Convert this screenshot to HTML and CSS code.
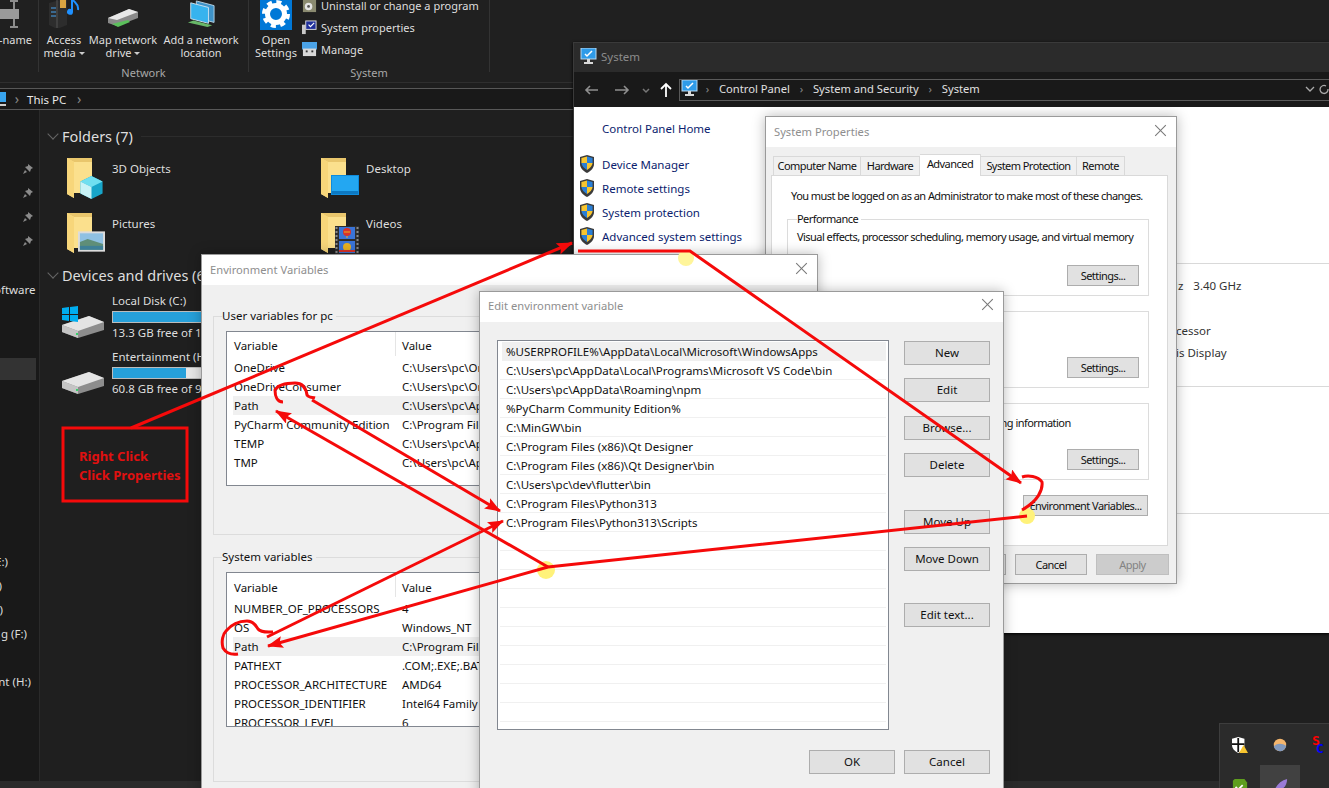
FILE: index.html
```html
<!DOCTYPE html>
<html lang="en">
<head>
    <meta charset="UTF-8">
    <meta name="viewport" content="width=device-width, initial-scale=1.0">
    <title>Environment Variables</title>
    <link rel="stylesheet" href="styles.css">
</head>
<body>
    <svg class="defs" width="0" height="0">
        <symbol id="folder" viewBox="0 0 26 42">
            <path d="M0 1h25v35H0z" fill="#e9c66c"/>
            <path d="M0 1l7 4h18v31H7v5l-7-4z" fill="#fbe08d"/>
            <path d="M0 1l7 4v36l-7-4z" fill="#f7d67a"/>
        </symbol>
        <symbol id="shield" viewBox="0 0 16 18">
            <path d="M8 0l7 2v7c0 4-3 7-7 9-4-2-7-5-7-9V2z" fill="#3b3b3b"/>
            <path d="M8 1.500l5.600 1.600V8H8z" fill="#2a7fd6"/>
            <path d="M8 1.500L2.400 3.100V8H8z" fill="#f7c52f"/>
            <path d="M8 8h5.600c-.3 3-2.700 5.300-5.600 7z" fill="#f7c52f"/>
            <path d="M8 8H2.400c.3 3 2.700 5.300 5.600 7z" fill="#2a7fd6"/>
        </symbol>
        <symbol id="drive" viewBox="0 0 42 22">
            <path d="M0 9L27 0l15 6v8L16 22 0 16z" fill="#8d8d8d"/>
            <path d="M0 9L27 0l15 6-26 9z" fill="#e4e4e4"/>
            <path d="M0 9l16 6v7L0 16z" fill="#c4c4c4"/>
            <rect x="14" y="17" width="2" height="2" fill="#35d06a"/>
        </symbol>
        <symbol id="monitor" viewBox="0 0 17 18">
            <rect x="1" y="0" width="15" height="11" fill="#2f9be8" stroke="#b8d8f0"/>
            <path d="M5 6l2 2 5-5" stroke="#fff" stroke-width="1.500" fill="none"/>
            <path d="M7 11h3v3h3v2H4v-2h3z" fill="#d8d8d8"/>
        </symbol>
        <marker id="head" markerWidth="16" markerHeight="12" refX="15" refY="6" orient="auto" markerUnits="userSpaceOnUse">
            <path d="M0 0L16 6 0 12 3 6z" fill="#f50a0a"/>
        </marker>
    </svg>

    <div class="desktop">
        <div class="explorer">
            <div class="ribbon">
                <div class="rib-group rib-clip">
                    <div class="rib-items">
                        <div class="rib-item rib-rename">
                            <svg class="rib-icon" viewBox="0 0 24 28"><path d="M13 1h8M13 27h8M17 1v26" stroke="#8c8c8c" stroke-width="2"/><rect x="-4" y="9" width="26" height="10" fill="#9a9a9a"/></svg>
                            <span>Re-name</span>
                        </div>
                    </div>
                </div>
                <div class="rib-group rib-network">
                    <div class="rib-items">
                        <div class="rib-item rib-media">
                            <svg class="rib-icon" viewBox="0 0 32 28"><path d="M1 3l18-5v27L9 29 1 25z" fill="#2d2d2d"/><path d="M9 0v29" stroke="#555"/><path d="M3 8h5M3 12h5M3 16h5" stroke="#49a5f2"/><rect x="12" y="0" width="6" height="8" fill="#d9a441"/><path d="M25 0v12a3 3 0 1 1-2-3V0z" fill="#1e90ff"/><path d="M25 0c2 3 6 4 5 10" stroke="#1e90ff" stroke-width="2" fill="none"/></svg>
                            <span>Access<br>media <i class="caret"></i></span>
                        </div>
                        <div class="rib-item rib-map">
                            <svg class="rib-icon" viewBox="0 0 32 28"><path d="M1 18L22 9l9 3v6L10 26 1 23z" fill="#8a8a8a"/><path d="M1 18L22 9l9 3-21 8z" fill="#e8e8e8"/><path d="M5 24l6 3 12-5-2-2z" fill="#5cc05c"/></svg>
                            <span>Map network<br>drive <i class="caret"></i></span>
                        </div>
                        <div class="rib-item rib-add">
                            <svg class="rib-icon" viewBox="0 0 30 30"><path d="M10 1l19 5v18l-19-5z" fill="#3f93c8" stroke="#b9d4e4"/><path d="M4 3l19 5v17L4 20z" fill="#37b3ee" stroke="#cfe2ee"/><path d="M1 24l6-2 20 5-5 2z" fill="#68b868"/></svg>
                            <span>Add a network<br>location</span>
                        </div>
                    </div>
                    <div class="rib-label">Network</div>
                </div>
                <div class="rib-group rib-system">
                    <div class="rib-items">
                        <div class="rib-item rib-settings">
                            <div class="gear-tile">
                                <svg viewBox="0 0 32 30"><circle cx="16" cy="14" r="8.500" fill="none" stroke="#fff" stroke-width="5"/><circle cx="16" cy="14" r="12" fill="none" stroke="#fff" stroke-width="4" stroke-dasharray="5 4.420"/></svg>
                            </div>
                            <span>Open<br>Settings</span>
                        </div>
                        <div class="rib-list">
                            <div class="rib-link">
                                <svg viewBox="0 0 16 16"><rect x="1" y="0" width="14" height="15" fill="#8a8a70"/><circle cx="7" cy="9" r="4" fill="#e4e4e4"/><circle cx="7" cy="9" r="1.500" fill="#555"/></svg>
                                Uninstall or change a program
                            </div>
                            <div class="rib-link">
                                <svg viewBox="0 0 16 16"><rect x="4" y="1" width="11" height="9" fill="#1f2f9a" stroke="#ddd"/><path d="M7 5l2 2 4-4" stroke="#fff" stroke-width="1.300" fill="none"/><rect x="0" y="5" width="4" height="10" fill="#c9c9c9"/></svg>
                                System properties
                            </div>
                            <div class="rib-link">
                                <svg viewBox="0 0 16 16"><rect x="0" y="0" width="16" height="8" fill="#4aa3e8"/><rect x="1" y="7" width="14" height="8" fill="#d8d8d8"/><rect x="4" y="9" width="2" height="2" fill="#333"/><rect x="10" y="9" width="2" height="2" fill="#333"/></svg>
                                Manage
                            </div>
                        </div>
                    </div>
                    <div class="rib-label">System</div>
                </div>
            </div>

            <div class="addr">
                <svg class="addr-pc" viewBox="0 0 7 16"><rect x="-9" y="1" width="15" height="10" fill="#38a4ee"/><rect x="-9" y="13" width="15" height="2" fill="#cfcfcf"/></svg>
                <span class="addr-sep">›</span>
                <span class="addr-text">This PC</span>
                <span class="addr-sep">›</span>
            </div>

            <div class="ex-body">
                <div class="nav">
                    <div class="pins">
                        <svg viewBox="0 0 12 12"><path d="M6 1l5 4-2 1-1 3-5-5 3-1zM3 7l-2 4 4-2z" fill="#8a8a8a"/></svg>
                        <svg viewBox="0 0 12 12"><path d="M6 1l5 4-2 1-1 3-5-5 3-1zM3 7l-2 4 4-2z" fill="#8a8a8a"/></svg>
                        <svg viewBox="0 0 12 12"><path d="M6 1l5 4-2 1-1 3-5-5 3-1zM3 7l-2 4 4-2z" fill="#8a8a8a"/></svg>
                        <svg viewBox="0 0 12 12"><path d="M6 1l5 4-2 1-1 3-5-5 3-1zM3 7l-2 4 4-2z" fill="#8a8a8a"/></svg>
                    </div>
                    <div class="nav-row nav-soft">oftware</div>
                    <div class="nav-row nav-selected"></div>
                    <div class="nav-drives">
                        <div class="nav-row nav-e">(E:)</div>
                        <div class="nav-row nav-i">(I:)</div>
                        <div class="nav-row nav-j">(J:)</div>
                        <div class="nav-row nav-f">g (F:)</div>
                        <div class="nav-row"></div>
                        <div class="nav-row nav-h">nt (H:)</div>
                    </div>
                </div>
                <div class="content">
                    <div class="sec-head"><i class="chev"></i><span>Folders (7)</span><b></b></div>
                    <div class="folders">
                        <div class="folder">
                            <div class="folder-pic">
                                <svg class="f-base"><use href="#folder"/></svg>
                                <svg class="f-badge" viewBox="0 0 26 26"><path d="M13 1l12 6v13l-12 6-12-6V7z" fill="#17a5c9"/><path d="M13 1l12 6-12 6L1 7z" fill="#6fdff0"/><path d="M1 7l12 6v13L1 20z" fill="#c8f3f7"/></svg>
                            </div>
                            <span>3D Objects</span>
                        </div>
                        <div class="folder">
                            <div class="folder-pic">
                                <svg class="f-base"><use href="#folder"/></svg>
                                <svg class="f-badge f-desk" viewBox="0 0 28 20"><rect width="28" height="20" fill="#0f8bdc"/><path d="M1 1h26v17H1z" fill="#23a7f2"/><path d="M1 16h26v3H1z" fill="#0d79c2"/></svg>
                            </div>
                            <span>Desktop</span>
                        </div>
                        <div class="folder">
                            <div class="folder-pic">
                                <svg class="f-base"><use href="#folder"/></svg>
                                <svg class="f-badge" viewBox="0 0 28 22"><rect width="28" height="21" fill="#dcdcdc"/><rect x="2" y="2" width="24" height="17" fill="#8fc1e3"/><path d="M2 11l8-3 16 5v6H2z" fill="#5f8e78"/><path d="M2 15h24v4H2z" fill="#3e7f96"/></svg>
                            </div>
                            <span>Pictures</span>
                        </div>
                        <div class="folder">
                            <div class="folder-pic">
                                <svg class="f-base"><use href="#folder"/></svg>
                                <svg class="f-badge f-film" viewBox="0 0 24 28"><rect width="24" height="28" fill="#2d2d2d"/><path d="M1.500 1v26M22.500 1v26" stroke="#8a8a8a" stroke-width="2" stroke-dasharray="2 2"/><rect x="4" y="1" width="16" height="12" fill="#3a74d8"/><rect x="4" y="15" width="16" height="12" fill="#3a74d8"/><circle cx="12" cy="6" r="4" fill="#d9322a"/><path d="M9 6h6M12 10v2" stroke="#e8b020"/><circle cx="12" cy="21" r="4" fill="#e8b020"/><path d="M4 25h16" stroke="#d9322a" stroke-width="2"/></svg>
                            </div>
                            <span>Videos</span>
                        </div>
                    </div>
                    <div class="sec-head sec-drives"><i class="chev"></i><span>Devices and drives (6)</span><b></b></div>
                    <div class="disks">
                        <div class="disk">
                            <div class="disk-pic">
                                <svg class="d-base"><use href="#drive"/></svg>
                                <svg class="d-win" viewBox="0 0 16 16"><path d="M0 2l7-1v7H0zM8 1l8-1v8H8zM0 9h7v6l-7-1zM8 9h8v7l-8-1z" fill="#00adef"/></svg>
                            </div>
                            <div class="disk-info">
                                <div>Local Disk (C:)</div>
                                <div class="bar"><div class="bar-fill" style="width: 88%"></div></div>
                                <div>13.3 GB free of 118 GB</div>
                            </div>
                        </div>
                        <div class="disk">
                            <div class="disk-pic">
                                <svg class="d-base"><use href="#drive"/></svg>
                            </div>
                            <div class="disk-info">
                                <div>Entertainment (H:)</div>
                                <div class="bar"><div class="bar-fill" style="width: 29%"></div></div>
                                <div>60.8 GB free of 99.9 GB</div>
                            </div>
                        </div>
                    </div>
                </div>
            </div>
            <div class="status"></div>
        </div>

        <div class="tray">
            <div class="tray-cell">
                <svg viewBox="0 0 18 18"><path d="M7 0l7 2v7c0 4-3 7-7 9-4-2-7-5-7-9V2z" fill="#fff"/><path d="M6 1h2v16H6zM0 7h14v2H0z" fill="#111"/><path d="M13 9l5 9H8z" fill="#f7c52f"/></svg>
            </div>
            <div class="tray-cell">
                <svg viewBox="0 0 18 18"><circle cx="9" cy="9" r="7" fill="#f3b56d"/><path d="M2 11c2-4 9-5 14-1-1 4-4 6-7 6s-6-2-7-5z" fill="#8199bd"/></svg>
            </div>
            <div class="tray-cell tray-sc"><span class="sc-s">S</span><span class="sc-c">C</span></div>
            <div class="tray-cell">
                <svg viewBox="0 0 18 18"><path d="M3 1h11l3 4v13H1V3z" fill="#5f9e1e"/><path d="M4 10l3 3 5-5" stroke="#fff" stroke-width="2" fill="none"/></svg>
            </div>
            <div class="tray-cell tray-hover">
                <svg viewBox="0 0 18 18"><path d="M2 18C3 9 9 3 17 1c0 8-5 13-12 13z" fill="#9b7bd8"/></svg>
            </div>
        </div>

        <section class="win win-system">
            <div class="sys-title">
                <svg class="mini"><use href="#monitor"/></svg>
                <span>System</span>
            </div>
            <div class="sys-nav">
                <svg class="nav-arrows" viewBox="0 0 94 16">
                    <path d="M17 8H5M9 4L5 8l4 4" stroke="#8f8f8f" stroke-width="1.600" fill="none"/>
                    <path d="M34 8h13M43 4l4 4-4 4" stroke="#8f8f8f" stroke-width="1.600" fill="none"/>
                    <path d="M62 7l3 3 3-3" stroke="#777" stroke-width="1.500" fill="none"/>
                    <path d="M85 15V2M80 7l5-5 5 5" stroke="#fff" stroke-width="1.800" fill="none"/>
                </svg>
                <div class="sys-addr">
                    <svg class="mini"><use href="#monitor"/></svg>
                    <span class="crumb-sep">›</span><span>Control Panel</span>
                    <span class="crumb-sep">›</span><span>System and Security</span>
                    <span class="crumb-sep">›</span><span>System</span>
                    <svg class="addr-end" viewBox="0 0 24 12"><path d="M1 4l4 4 4-4" stroke="#aaa" fill="none" stroke-width="1.300"/><path d="M23 6a4 4 0 1 1-2-3" stroke="#aaa" fill="none" stroke-width="1.300"/></svg>
                </div>
            </div>
            <div class="sys-body">
                <div class="sys-side">
                    <div class="side-home">Control Panel Home</div>
                    <div class="side-link"><svg><use href="#shield"/></svg>Device Manager</div>
                    <div class="side-link"><svg><use href="#shield"/></svg>Remote settings</div>
                    <div class="side-link"><svg><use href="#shield"/></svg>System protection</div>
                    <div class="side-link"><svg><use href="#shield"/></svg>Advanced system settings</div>
                </div>
                <div class="sys-info">
                    <div class="info-rule info-top"></div>
                    <div class="info-row info-ghz"><span>GHz</span><span class="info-speed">3.40 GHz</span></div>
                    <div class="info-row info-cpu">cessor</div>
                    <div class="info-row info-disp">is Display</div>
                    <div class="info-rule info-mid"></div>
                    <div class="info-rule info-low"></div>
                </div>
            </div>
        </section>

        <section class="win dlg dlg-props">
            <div class="dlg-title"><span>System Properties</span><i class="close"></i></div>
            <div class="dlg-body props-body">
                <div class="tabs">
                    <div class="tab tab-1">Computer Name</div>
                    <div class="tab tab-2">Hardware</div>
                    <div class="tab tab-on">Advanced</div>
                    <div class="tab tab-4">System Protection</div>
                    <div class="tab tab-5">Remote</div>
                </div>
                <div class="tab-panel">
                    <p class="admin-note">You must be logged on as an Administrator to make most of these changes.</p>
                    <fieldset class="prop-box">
                        <legend>Performance</legend>
                        <p>Visual effects, processor scheduling, memory usage, and virtual memory</p>
                        <div class="btn-end"><button class="btn btn-small">Settings...</button></div>
                    </fieldset>
                    <fieldset class="prop-box prop-profile">
                        <legend>User Profiles</legend>
                        <p>Desktop settings related to your sign-in</p>
                        <div class="btn-end"><button class="btn btn-small">Settings...</button></div>
                    </fieldset>
                    <fieldset class="prop-box prop-startup">
                        <legend>Startup and Recovery</legend>
                        <p>System startup, system failure, and debugging information</p>
                        <div class="btn-end"><button class="btn btn-small">Settings...</button></div>
                    </fieldset>
                    <div class="btn-end env-row"><button class="btn btn-env">Environment Variables...</button></div>
                </div>
                <div class="props-foot">
                    <button class="btn btn-small">OK</button>
                    <button class="btn btn-small">Cancel</button>
                    <button class="btn btn-small btn-off">Apply</button>
                </div>
            </div>
        </section>

        <section class="win dlg dlg-env">
            <div class="dlg-title"><span>Environment Variables</span><i class="close"></i></div>
            <div class="dlg-body env-body">
                <fieldset class="env-group">
                    <legend>User variables for pc</legend>
                    <div class="var-list">
                        <div class="var-head var-head-user"><span>Variable</span><span class="val-head">Value</span></div>
                        <div class="var-row"><span>OneDrive</span><span>C:\Users\pc\OneDrive</span></div>
                        <div class="var-row"><span>OneDriveConsumer</span><span>C:\Users\pc\OneDrive</span></div>
                        <div class="var-row var-sel"><span>Path</span><span>C:\Users\pc\AppData</span></div>
                        <div class="var-row"><span>PyCharm Community Edition</span><span>C:\Program Files</span></div>
                        <div class="var-row"><span>TEMP</span><span>C:\Users\pc\AppData</span></div>
                        <div class="var-row"><span>TMP</span><span>C:\Users\pc\AppData</span></div>
                    </div>
                </fieldset>
                <fieldset class="env-group env-group-sys">
                    <legend>System variables</legend>
                    <div class="var-list">
                        <div class="var-head"><span>Variable</span><span class="val-head">Value</span></div>
                        <div class="var-row"><span>NUMBER_OF_PROCESSORS</span><span>4</span></div>
                        <div class="var-row"><span>OS</span><span>Windows_NT</span></div>
                        <div class="var-row var-sel"><span>Path</span><span>C:\Program Files</span></div>
                        <div class="var-row"><span>PATHEXT</span><span>.COM;.EXE;.BAT;.CMD</span></div>
                        <div class="var-row"><span>PROCESSOR_ARCHITECTURE</span><span>AMD64</span></div>
                        <div class="var-row"><span>PROCESSOR_IDENTIFIER</span><span>Intel64 Family 6</span></div>
                        <div class="var-row"><span>PROCESSOR_LEVEL</span><span>6</span></div>
                    </div>
                </fieldset>
            </div>
        </section>

        <section class="win dlg dlg-edit">
            <div class="dlg-title"><span>Edit environment variable</span><i class="close"></i></div>
            <div class="dlg-body edit-body">
                <div class="edit-main">
                    <div class="path-list">
                        <div class="path-row path-sel">%USERPROFILE%\AppData\Local\Microsoft\WindowsApps</div>
                        <div class="path-row">C:\Users\pc\AppData\Local\Programs\Microsoft VS Code\bin</div>
                        <div class="path-row">C:\Users\pc\AppData\Roaming\npm</div>
                        <div class="path-row">%PyCharm Community Edition%</div>
                        <div class="path-row">C:\MinGW\bin</div>
                        <div class="path-row">C:\Program Files (x86)\Qt Designer</div>
                        <div class="path-row">C:\Program Files (x86)\Qt Designer\bin</div>
                        <div class="path-row">C:\Users\pc\dev\flutter\bin</div>
                        <div class="path-row">C:\Program Files\Python313</div>
                        <div class="path-row">C:\Program Files\Python313\Scripts</div>
                        <div class="path-row"></div>
                        <div class="path-row"></div>
                        <div class="path-row"></div>
                        <div class="path-row"></div>
                        <div class="path-row"></div>
                        <div class="path-row"></div>
                        <div class="path-row"></div>
                        <div class="path-row"></div>
                        <div class="path-row"></div>
                        <div class="path-row"></div>
                    </div>
                    <div class="edit-btns">
                        <button class="btn btn-wide">New</button>
                        <button class="btn btn-wide">Edit</button>
                        <button class="btn btn-wide btn-nudge">Browse...</button>
                        <button class="btn btn-wide">Delete</button>
                        <button class="btn btn-wide btn-gap">Move Up</button>
                        <button class="btn btn-wide">Move Down</button>
                        <button class="btn btn-wide btn-gap-last">Edit text...</button>
                    </div>
                </div>
                <div class="edit-foot">
                    <button class="btn btn-wide">OK</button>
                    <button class="btn btn-wide">Cancel</button>
                </div>
            </div>
        </section>

        <svg class="marks" viewBox="0 0 1329 788">
            <circle cx="686" cy="258" r="8" fill="#fff59a"/>
            <circle cx="1027" cy="516" r="8" fill="#fff27a"/>
            <circle cx="546" cy="570" r="9" fill="#fff27a"/>
            <rect x="63" y="428" width="124" height="73" class="mark-line"/>
            <path d="M131 428L572 243" class="mark-line" marker-end="url(#head)"/>
            <path d="M578 251H690L1021 483" class="mark-line" marker-end="url(#head)"/>
            <path d="M1022 477C1028 475 1038 476 1042 482C1043 490 1038 501 1022 510" class="mark-line"/>
            <path d="M1027 516L548 567L268 646" class="mark-line" marker-end="url(#head)"/>
            <path d="M548 567L276 411" class="mark-line" marker-end="url(#head)"/>
            <path d="M312 400L500 511" class="mark-line" marker-end="url(#head)"/>
            <path d="M267 637L503 521" class="mark-line" marker-end="url(#head)"/>
            <path d="M283 402C277 402 275 396 275 390C278 385 284 383 295 383C303 383 306 388 307 395C309 398 312 397 315 398" class="mark-line"/>
            <path d="M238 654C231 655 226 653 223 648C221 641 223 634 226 631C231 625 238 621 247 621C254 621 256 626 258 629C261 633 268 632 273 632" class="mark-line"/>
        </svg>
        <div class="callout">Right Click<br>Click Properties</div>
    </div>
</body>
</html>
```

FILE: styles.css
```css
* {
    box-sizing: border-box;
}

body {
    margin: 0;
    font-family: "Noto Sans", "Open Sans", sans-serif;
    font-size: 11.5px;
    background-color: #1f1f1f;
}

.defs {
    position: absolute;
}

.desktop {
    position: relative;
    width: 1329px;
    height: 788px;
    overflow: hidden;
    color: #111;
}

/* explorer behind the windows */
.explorer {
    display: flex;
    flex-direction: column;
    height: 788px;
    color: #dedede;
}

.ribbon {
    display: flex;
    height: 83px;
    font-size: 11px;
    background-color: #202020;
    border-bottom: 1px solid #2f2f2f;
}

.rib-group {
    position: relative;
    border-right: 1px solid #333;
    height: 72px;
}

.rib-clip {
    width: 39px;
    overflow: hidden;
}

.rib-network {
    width: 210px;
}

.rib-system {
    width: 241px;
}

.rib-items {
    display: flex;
    height: 60px;
}

.rib-item {
    display: flex;
    flex-direction: column;
    align-items: center;
    text-align: center;
    line-height: 13px;
    white-space: nowrap;
}

.rib-icon {
    width: 32px;
    height: 28px;
    margin-bottom: 5px;
    overflow: hidden;
}

.rib-rename {
    margin-left: -20px;
    width: 60px;
}

.rib-media {
    width: 40px;
    margin-left: 5px;
}

.rib-map {
    width: 70px;
    margin-left: 4px;
}

.rib-add {
    width: 78px;
    margin-left: 4px;
}

.rib-settings {
    width: 42px;
    margin-left: 6px;
}

.gear-tile {
    width: 32px;
    height: 30px;
    margin-bottom: 3px;
    background-color: #0078d7;
}

.gear-tile svg {
    display: block;
}

.rib-list {
    margin-left: 5px;
    display: flex;
    flex-direction: column;
    gap: 7px;
    margin-top: -2px;
}

.rib-link {
    display: flex;
    align-items: center;
    gap: 4px;
    height: 15px;
    white-space: nowrap;
}

.rib-link svg {
    width: 15px;
    height: 15px;
}

.rib-label {
    position: absolute;
    left: 0;
    right: 0;
    top: 66px;
    text-align: center;
    color: #a8a8a8;
    line-height: 14px;
}

.caret {
    display: inline-block;
    border: 3px solid transparent;
    border-top-color: #ccc;
    border-bottom: 0;
    vertical-align: 2px;
}

.addr {
    display: flex;
    align-items: center;
    height: 22px;
    margin-top: 5px;
    background-color: #191919;
    border-top: 1px solid #585858;
    border-bottom: 1px solid #585858;
    color: #e8e8e8;
}

.addr-pc {
    width: 7px;
    height: 16px;
}

.addr-sep {
    width: 20px;
    text-align: center;
    color: #888;
    font-size: 14px;
    line-height: 14px;
}

.addr-text {
    padding: 0 3px 0 0;
}

.ex-body {
    display: flex;
    flex: 1;
    min-height: 0;
}

.nav {
    width: 40px;
    background-color: #191919;
    border-right: 1px solid #2a2a2a;
    padding-top: 53px;
    overflow: hidden;
}

.pins {
    display: flex;
    flex-direction: column;
    align-items: flex-end;
    gap: 12px;
    padding-right: 5px;
    height: 114px;
}

.pins svg {
    width: 12px;
    height: 12px;
}

.nav-row {
    display: flex;
    justify-content: flex-end;
    align-items: center;
    height: 24px;
    white-space: nowrap;
}

.nav-soft {
    justify-content: flex-start;
    margin-left: -6px;
}

.nav-selected {
    margin-top: 57px;
    height: 22px;
    width: 36px;
    background-color: #333;
}

.nav-drives {
    margin-top: 169px;
}

.nav-e {
    width: 8px;
}

.nav-i {
    width: 2px;
}

.nav-j {
    width: 3px;
}

.nav-f {
    width: 27px;
}

.nav-h {
    width: 31px;
}

.content {
    flex: 1;
    padding: 14px 0 0 7px;
}

.sec-head {
    display: flex;
    align-items: center;
    height: 24px;
    font-size: 14.500px;
}

.sec-head b {
    flex: 1;
    height: 1px;
    margin-left: 8px;
    background-color: #2c2c2c;
}

.chev {
    width: 8px;
    height: 8px;
    margin: 0 5px 4px 2px;
    border-right: 1px solid #666;
    border-bottom: 1px solid #666;
    transform: rotate(45deg);
}

.sec-drives {
    margin-top: 6px;
}

.folders {
    display: grid;
    grid-template-columns: 254px 254px;
    grid-template-rows: 55px 45px;
    padding: 9px 0 0 20px;
}

.folder {
    display: flex;
    gap: 7px;
    line-height: 24px;
}

.folder-pic {
    position: relative;
    width: 38px;
    height: 42px;
    flex: none;
}

.f-base {
    position: absolute;
    left: 0;
    top: 0;
    width: 26px;
    height: 42px;
}

.f-badge {
    position: absolute;
    right: 0;
    bottom: 0;
    width: 27px;
    height: 24px;
}

.f-desk {
    width: 28px;
    height: 20px;
    bottom: 4px;
}

.f-film {
    width: 24px;
    height: 28px;
}

.disks {
    display: flex;
    flex-direction: column;
    gap: 8px;
    padding: 6px 0 0 15px;
}

.disk {
    display: flex;
    gap: 8px;
}

.disk-pic {
    position: relative;
    width: 42px;
    height: 48px;
    flex: none;
}

.d-base {
    position: absolute;
    left: 0;
    top: 23px;
    width: 42px;
    height: 22px;
}

.d-win {
    position: absolute;
    left: 0;
    top: 13px;
    width: 16px;
    height: 16px;
}

.disk-info {
    width: 300px;
    line-height: 16px;
    white-space: nowrap;
}

.bar {
    width: 254px;
    height: 12px;
    margin: 2px 0;
    background-color: #e6e6e6;
    border: 1px solid #bcbcbc;
}

.bar-fill {
    height: 100%;
    background-color: #26a0da;
}

.status {
    height: 7px;
    background-color: #2b2b2b;
}

.tray {
    position: absolute;
    left: 1219px;
    top: 723px;
    width: 120px;
    height: 80px;
    display: grid;
    grid-template-columns: repeat(3, 40px);
    grid-auto-rows: 41px;
    background-color: #2b2b2b;
    border: 1px solid #3d3d3d;
}

.tray-cell {
    display: flex;
    justify-content: center;
    align-items: center;
}

.tray-cell svg {
    width: 16px;
    height: 16px;
}

.tray-hover {
    background-color: #414141;
}

.tray-sc {
    flex-direction: column;
    font: bold 13px/8px "DejaVu Sans Mono", monospace;
}

.sc-s {
    color: #f00;
    margin-left: -8px;
}

.sc-c {
    color: #00f;
}

/* windows */
.win {
    position: absolute;
}

.win-system {
    left: 573px;
    top: 42px;
    width: 756px;
    height: 591px;
    display: flex;
    flex-direction: column;
    background-color: #fff;
    border-left: 1px solid #3a3a3a;
    border-top: 1px solid #3a3a3a;
    box-shadow: 0 1px 3px #000;
}

.sys-title {
    display: flex;
    align-items: center;
    gap: 4px;
    height: 29px;
    padding: 0 0 2px 6px;
    background-color: #2b2b2b;
    color: #8c8c8c;
}

.mini {
    width: 17px;
    height: 18px;
    flex: none;
}

.sys-nav {
    display: flex;
    align-items: center;
    height: 35px;
    background-color: #191919;
}

.nav-arrows {
    width: 94px;
    height: 16px;
    margin-left: 7px;
    margin-right: 4px;
}

.sys-addr {
    flex: 1;
    display: flex;
    align-items: center;
    height: 22px;
    padding-bottom: 2px;
    font-size: 11.200px;
    color: #e0e0e0;
    border: 1px solid #5a5a5a;
    border-right: 0;
    background-color: #191919;
}

.sys-addr .mini {
    margin-left: 1px;
    margin-right: -2px;
}

.crumb-sep {
    width: 23px;
    text-align: center;
    color: #888;
}

.addr-end {
    width: 24px;
    height: 12px;
    margin-left: auto;
    margin-right: 0;
}

.sys-body {
    flex: 1;
    display: flex;
}

.sys-side {
    width: 190px;
    padding: 14px 0 0 5px;
    color: #0b1d6e;
}

.side-home {
    padding-left: 23px;
    line-height: 16px;
    margin-bottom: 15px;
}

.side-link {
    display: flex;
    align-items: center;
    gap: 7px;
    height: 24px;
}

.side-link svg {
    width: 16px;
    height: 18px;
}

.sys-info {
    flex: 1;
    padding-top: 156px;
    color: #333;
}

.info-rule {
    height: 1px;
    background-color: #d9d9d9;
}

.info-row {
    white-space: nowrap;
    line-height: 16px;
}

.info-ghz {
    margin-top: 14px;
    padding-left: 397px;
}

.info-speed {
    margin-left: 10px;
}

.info-cpu {
    margin-top: 29px;
    padding-left: 412px;
}

.info-disp {
    margin-top: 6px;
    padding-left: 412px;
}

.info-mid {
    margin-top: 25px;
}

.info-low {
    margin-top: 126px;
}

/* dialogs */
.dlg {
    display: flex;
    flex-direction: column;
    background-color: #f0f0f0;
    border: 1px solid #9a9a9a;
    box-shadow: 0 0 12px rgba(0, 0, 0, .28);
}

.dlg-title {
    display: flex;
    justify-content: space-between;
    align-items: center;
    flex: none;
    height: 30px;
    padding: 0 9px 2px 8px;
    font-size: 11.200px;
    background-color: #fff;
    color: #8e8e8e;
}

.close {
    position: relative;
    width: 12px;
    height: 12px;
}

.close::before,
.close::after {
    content: "";
    position: absolute;
    left: 5px;
    top: -2px;
    width: 1px;
    height: 15px;
    background-color: #777;
    transform: rotate(45deg);
}

.close::after {
    transform: rotate(-45deg);
}

.dlg-body {
    flex: 1;
    min-height: 0;
}

.btn {
    display: block;
    padding: 0 0 1px;
    font: inherit;
    letter-spacing: inherit;
    color: #111;
    background-color: #e1e1e1;
    border: 1px solid #adadad;
    white-space: nowrap;
}

.btn-small {
    width: 72px;
    height: 21px;
}

.btn-wide {
    width: 86px;
    height: 24px;
}

.btn-off {
    width: 73px;
    color: #838383;
    background-color: #ccc;
    border-color: #bfbfbf;
}

.btn-env {
    width: 125px;
    height: 21px;
}

.btn-end {
    display: flex;
    justify-content: flex-end;
}

.dlg-props {
    left: 765px;
    top: 116px;
    width: 412px;
    height: 468px;
}

.props-body {
    padding: 7px 8px 0 5px;
    font-size: 11px;
    letter-spacing: -.55px;
}

.tabs {
    display: flex;
    align-items: flex-end;
    height: 21px;
    padding-left: 2px;
}

.tab {
    height: 19px;
    text-align: center;
    border: 1px solid #d9d9d9;
    border-bottom: 0;
    border-left: 0;
    line-height: 17px;
    white-space: nowrap;
    background-color: #f0f0f0;
}

.tab-1 {
    width: 88px;
    border-left: 1px solid #d9d9d9;
}

.tab-2 {
    width: 59px;
}

.tab-on {
    width: 61px;
    position: relative;
    z-index: 1;
    margin-bottom: -1px;
    height: 22px;
    background-color: #fff;
}

.tab-4 {
    width: 96px;
}

.tab-5 {
    width: 48px;
}

.tab-panel {
    height: 371px;
    padding: 12px 18px 0 15px;
    background-color: #fff;
    border: 1px solid #d9d9d9;
}

.admin-note {
    margin: 0 0 8px 4px;
    line-height: 16px;
    white-space: nowrap;
}

.prop-box {
    height: 84px;
    margin: 0 0 8px 0;
    padding: 3px 9px 0 9px;
    border: 1px solid #dcdcdc;
    min-width: 0;
}

.prop-box legend {
    padding: 0 3px 0 0;
    line-height: 14px;
}

.prop-box p {
    margin: 0;
    height: 36px;
    line-height: 16px;
    white-space: nowrap;
}

.prop-profile p {
    visibility: hidden;
}

.prop-startup {
    margin-top: 1px;
}

.prop-startup p {
    padding-top: 2px;
}

.env-row {
    margin: 15px 1px 0 0;
}

.props-foot {
    display: flex;
    justify-content: flex-end;
    gap: 9px;
    margin: 8px -1px 0 0;
}

.dlg-env {
    left: 201px;
    top: 254px;
    width: 617px;
    height: 540px;
}

.env-body {
    padding: 24px 12px 0 11px;
}

.env-group {
    height: 226px;
    margin: 0 0 15px 0;
    padding: 8px 0 0 12px;
    border: 1px solid #dcdcdc;
    min-width: 0;
}

.env-group legend {
    padding: 0 3px 0 0;
    margin-left: -4px;
    line-height: 14px;
}

.env-group-sys {
    height: 232px;
}

.var-list {
    width: 400px;
    height: 155px;
    padding: 0 0 0 6px;
    background-color: #fff;
    border: 1px solid #828790;
    overflow: hidden;
}

.var-head {
    display: grid;
    grid-template-columns: 168px 1fr;
    height: 26px;
    line-height: 29px;
    padding-left: 1px;
}

.var-head-user {
    height: 26px;
    line-height: 28px;
}

.val-head {
    position: relative;
}

.val-head::before {
    content: "";
    position: absolute;
    left: -7px;
    top: 0;
    width: 1px;
    height: 24px;
    background-color: #e5e5e5;
}

.var-row {
    display: grid;
    grid-template-columns: 168px 1fr;
    height: 19px;
    line-height: 19px;
    padding-left: 1px;
    white-space: nowrap;
}

.var-sel {
    background-color: #f0f0f0;
}

.dlg-edit {
    left: 479px;
    top: 291px;
    width: 525px;
    height: 510px;
}

.dlg-edit .dlg-title {
    padding-bottom: 4px;
}

.edit-body {
    padding: 18px 13px 0 17px;
}

.edit-main {
    display: flex;
    gap: 15px;
}

.path-list {
    width: 392px;
    height: 390px;
    padding: 1px 2px 0 2px;
    background-color: #fff;
    border: 1px solid #828790;
    overflow: hidden;
}

.path-row {
    height: 19px;
    padding-left: 6px;
    line-height: 19px;
    border-bottom: 1px solid #f0f0f0;
    white-space: nowrap;
}

.path-sel {
    background-color: #f0f0f0;
    margin-left: 2px;
    padding-left: 4px;
}

.edit-btns {
    display: flex;
    flex-direction: column;
    gap: 13px;
    padding-top: 1px;
}

.btn-nudge {
    margin-top: 1px;
}

.btn-gap {
    margin-top: 20px;
}

.btn-gap-last {
    margin-top: 19px;
}

.edit-foot {
    display: flex;
    justify-content: flex-end;
    gap: 9px;
    margin-top: 20px;
}

/* red notes on top of the screenshot */
.marks {
    position: absolute;
    left: 0;
    top: 0;
    width: 1329px;
    height: 788px;
    pointer-events: none;
}

.mark-line {
    fill: none;
    stroke: #f50a0a;
    stroke-width: 3;
}

.callout {
    position: absolute;
    left: 79px;
    top: 447px;
    color: #e01010;
    font-weight: bold;
    font-size: 13px;
    line-height: 19px;
}
```
